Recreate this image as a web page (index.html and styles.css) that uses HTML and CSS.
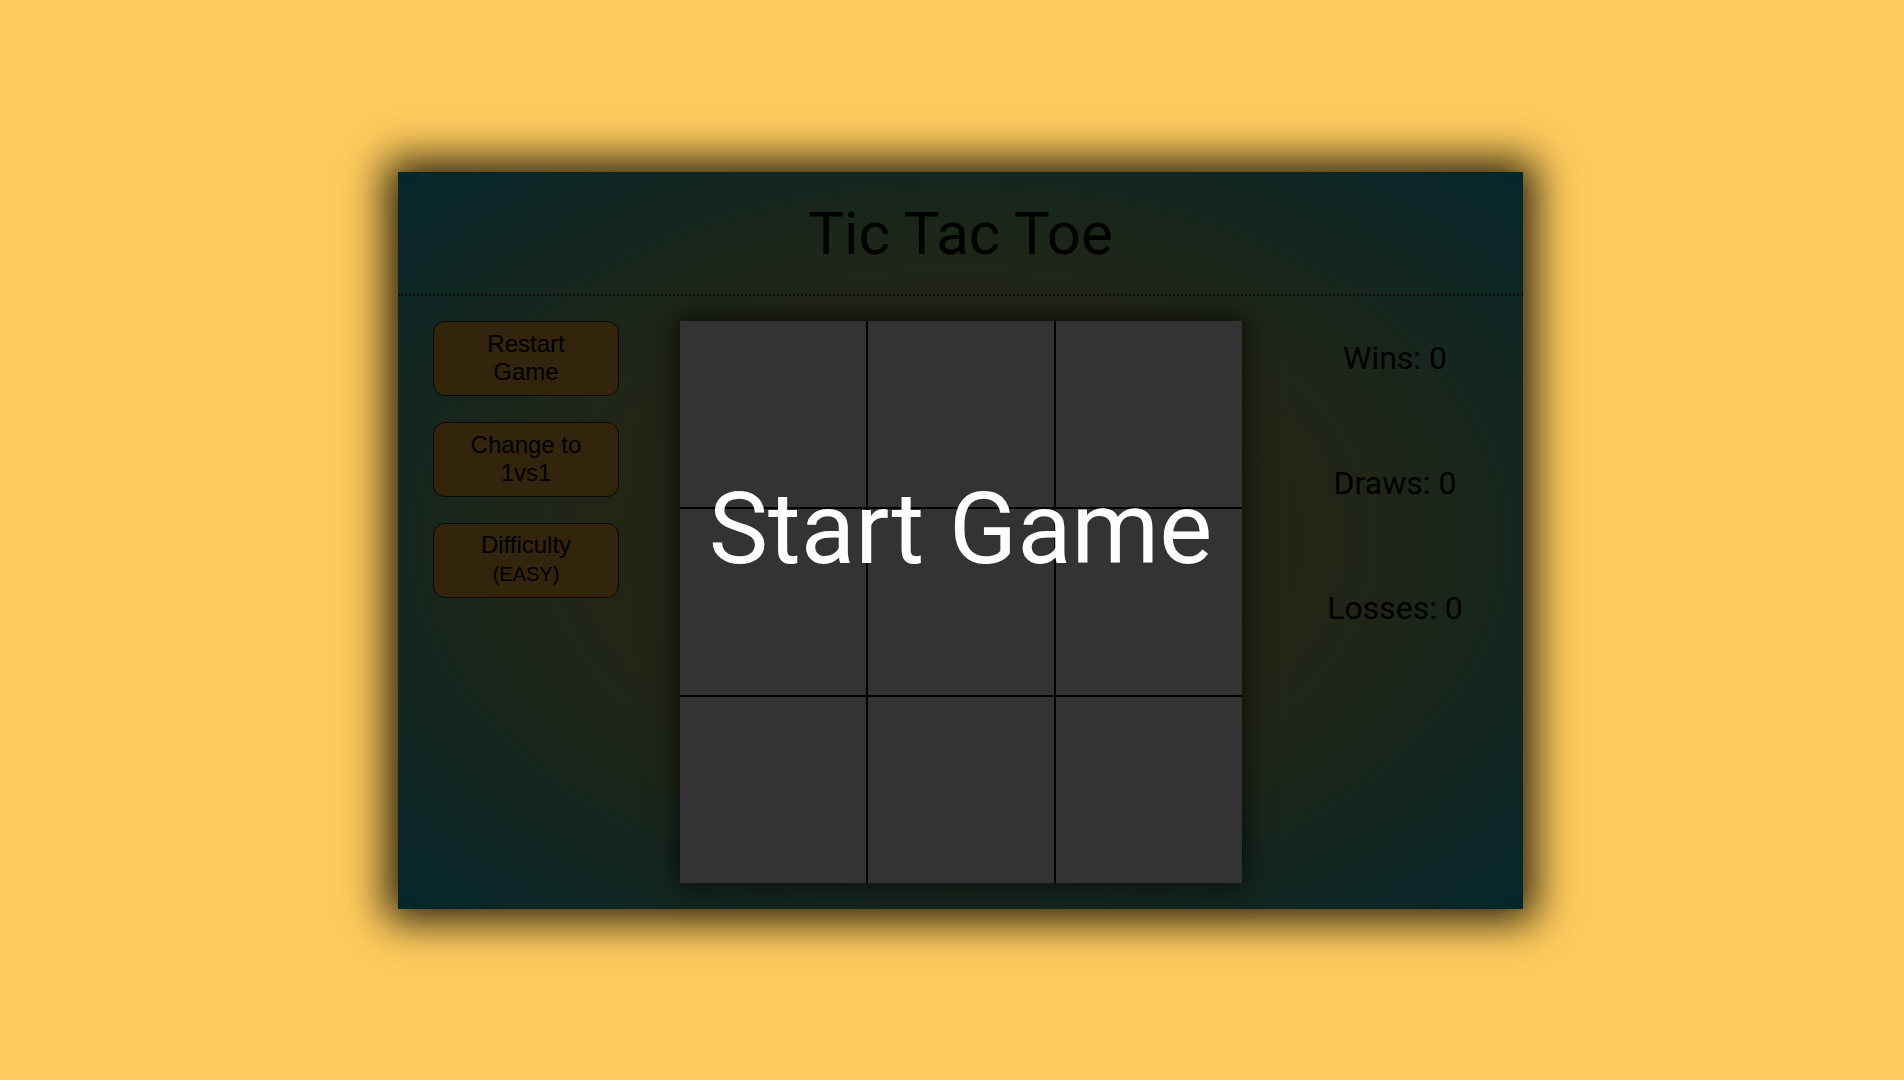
FILE: index.html
```html
<!DOCTYPE html>
<html lang="en">
<head>
<meta charset="utf-8">
<title>Tic Tac Toe</title>
<link rel="stylesheet" href="styles.css">
</head>
<body>
<main class="game">
  <header class="game-header">
    <h1 class="title">Tic Tac Toe</h1>
  </header>
  <section class="game-body">
    <aside class="controls">
      <button class="btn">Restart Game</button>
      <button class="btn">Change to 1vs1</button>
      <button class="btn">Difficulty <span class="level">(EASY)</span></button>
    </aside>
    <div class="board-wrap">
      <div class="board">
        <div class="cell"></div><div class="cell"></div><div class="cell"></div>
        <div class="cell"></div><div class="cell"></div><div class="cell"></div>
        <div class="cell"></div><div class="cell"></div><div class="cell"></div>
        <div class="start">Start Game</div>
      </div>
    </div>
    <aside class="stats">
      <p class="stat">Wins: 0</p>
      <p class="stat">Draws: 0</p>
      <p class="stat">Losses: 0</p>
    </aside>
  </section>
</main>
</body>
</html>
```
FILE: styles.css
```css
html, body {
  margin: 0;
  padding: 0;
}
body {
  background: #fecb5d;
  height: 100vh;
  display: flex;
  align-items: center;
  justify-content: center;
  font-family: Roboto, "Liberation Sans", sans-serif;
}
.game {
  width: 1125px;
  height: 737px;
  margin-left: 17px;
  display: flex;
  flex-direction: column;
  background: radial-gradient(ellipse at center, #2c2411 0%, #1f2618 55%, #05272b 100%);
  box-shadow: 0 0 40px 12px rgba(0, 0, 0, 0.85);
}
.game-header {
  height: 122px;
  display: flex;
  align-items: center;
  justify-content: center;
  border-bottom: 2px dotted #0d0d0a;
}
.title {
  margin: 0;
  font-family: Roboto, sans-serif;
  font-weight: 400;
  font-size: 60px;
  color: #000;
  padding-top: 2px;
}
.game-body {
  flex: 1;
  display: flex;
  padding: 25px 0;
}
.controls {
  width: 256px;
  display: flex;
  flex-direction: column;
  align-items: center;
  gap: 26px;
}
.btn {
  width: 186px;
  height: 75px;
  padding: 0 20px;
  border: 1px solid #0a0806;
  border-radius: 12px;
  background: #33250b;
  color: #000;
  font-family: "Liberation Sans", Arial, sans-serif;
  font-size: 24px;
  line-height: 27.6px;
}
.level {
  font-size: 20px;
}
.board-wrap {
  flex: 1;
  display: flex;
  justify-content: center;
}
.board {
  position: relative;
  width: 562px;
  height: 562px;
  display: grid;
  grid-template-columns: repeat(3, 1fr);
  grid-template-rows: repeat(3, 1fr);
  gap: 2px;
  background: #000;
  box-shadow: 0 0 25px 4px rgba(0, 0, 0, 0.6);
}
.cell {
  background: #333;
}
.start {
  position: absolute;
  left: 0;
  right: 0;
  top: 149px;
  text-align: center;
  font-family: Roboto, sans-serif;
  font-size: 100px;
  color: #fff;
  line-height: 117px;
}
.stats {
  width: 256px;
  display: flex;
  flex-direction: column;
  align-items: center;
}
.stat {
  margin: 0 0 87px;
  font-family: Roboto, sans-serif;
  font-size: 32px;
  color: #000;
  line-height: 38px;
}
.stat:first-child {
  margin-top: 18px;
}
```
